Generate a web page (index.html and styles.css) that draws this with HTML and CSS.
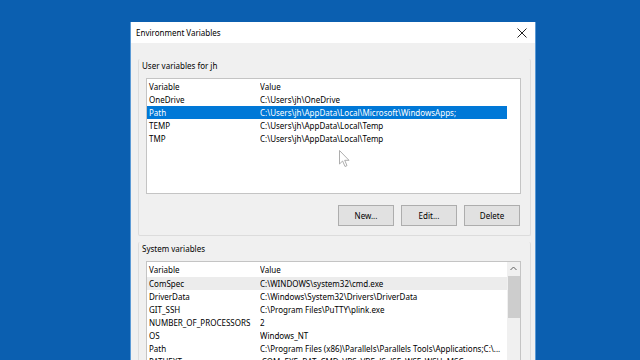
FILE: index.html
```html
<!DOCTYPE html>
<html lang="en">
<head>
    <meta charset="UTF-8">
    <title>Environment Variables</title>
    <link rel="stylesheet" href="styles.css">
</head>
<body>
    <div class="dialog">
        <div class="title-bar">
            <span class="title">Environment Variables</span>
            <svg class="close" width="10" height="10" viewBox="0 0 10 10"><path d="M0.5 0.5L9.5 9.5M9.5 0.5L0.5 9.5" stroke="#222" stroke-width="1"/></svg>
        </div>
        <div class="content">
            <div class="group user-group">
                <div class="group-label">User variables for jh</div>
                <div class="list user-list">
                    <div class="row header"><span class="col-name">Variable</span><span class="col-value">Value</span></div>
                    <div class="row"><span class="col-name">OneDrive</span><span class="col-value">C:\Users\jh\OneDrive</span></div>
                    <div class="row selected"><span class="col-name">Path</span><span class="col-value">C:\Users\jh\AppData\Local\Microsoft\WindowsApps;</span></div>
                    <div class="row"><span class="col-name">TEMP</span><span class="col-value">C:\Users\jh\AppData\Local\Temp</span></div>
                    <div class="row"><span class="col-name">TMP</span><span class="col-value">C:\Users\jh\AppData\Local\Temp</span></div>
                </div>
                <div class="buttons">
                    <button>New...</button>
                    <button>Edit...</button>
                    <button>Delete</button>
                </div>
            </div>
            <div class="group system-group">
                <div class="group-label">System variables</div>
                <div class="list system-list">
                    <div class="rows">
                        <div class="row header"><span class="col-name">Variable</span><span class="col-value">Value</span></div>
                        <div class="row hover"><span class="col-name">ComSpec</span><span class="col-value">C:\WINDOWS\system32\cmd.exe</span></div>
                        <div class="row"><span class="col-name">DriverData</span><span class="col-value">C:\Windows\System32\Drivers\DriverData</span></div>
                        <div class="row"><span class="col-name">GIT_SSH</span><span class="col-value">C:\Program Files\PuTTY\plink.exe</span></div>
                        <div class="row"><span class="col-name">NUMBER_OF_PROCESSORS</span><span class="col-value">2</span></div>
                        <div class="row"><span class="col-name">OS</span><span class="col-value">Windows_NT</span></div>
                        <div class="row"><span class="col-name">Path</span><span class="col-value">C:\Program Files (x86)\Parallels\Parallels Tools\Applications;C:\...</span></div>
                        <div class="row"><span class="col-name">PATHEXT</span><span class="col-value">.COM;.EXE;.BAT;.CMD;.VBS;.VBE;.JS;.JSE;.WSF;.WSH;.MSC</span></div>
                    </div>
                    <div class="scrollbar">
                        <svg class="arrow" width="7" height="5" viewBox="0 0 7 5"><path d="M0.5 4L3.5 1L6.5 4" fill="none" stroke="#606060" stroke-width="1"/></svg>
                        <div class="thumb"></div>
                    </div>
                </div>
            </div>
        </div>
    </div>
    <svg class="cursor" width="12" height="18" viewBox="0 0 12 18"><path d="M0.5 0.5L0.5 14L3.6 11L6 16.5L8 15.6L5.7 10.3L10 10.3Z" fill="#fff" stroke="#999" stroke-width="0.8"/></svg>
</body>
</html>
```

FILE: styles.css
```css
* {
    box-sizing: border-box;
}

body {
    margin: 0;
    height: 360px;
    overflow: hidden;
    background: #0b5fb0;
    font-family: "Noto Sans", "Open Sans", sans-serif;
    font-size: 8px;
    color: #000;
}

.dialog {
    margin: 22px 0 0 130px;
    width: 406px;
    height: 338px;
    border-left: 1px solid #5a9ad6;
    border-right: 1px solid #5a9ad6;
    background: #f0f0f0;
    overflow: hidden;
}

.title-bar {
    height: 21px;
    margin-bottom: 1px;
    background: #fff;
    display: flex;
    align-items: center;
    justify-content: space-between;
    padding: 0 8px 0 5px;
}

.title {
    font-size: 8px;
}

.content {
    padding: 15px 4px 0 7px;
}

.group {
    border: 1px solid #dcdcdc;
    border-top: none;
    border-radius: 2px;
    padding: 0 9px 0 7px;
}

.group-label {
    height: 13px;
    line-height: 13px;
    margin-left: -4px;
}

.user-group {
    padding-bottom: 9px;
}

.system-group {
    margin-top: 6px;
    border-bottom: none;
    height: 200px;
}

.list {
    background: #fff;
    border: 1px solid #c4c4c4;
    margin-top: 6px;
}

.user-list {
    height: 116px;
    padding-top: 1px;
}

.system-list {
    height: 130px;
    display: flex;
}

.rows {
    width: 360px;
    padding-top: 1px;
}

.row {
    height: 13px;
    line-height: 13px;
    display: flex;
    white-space: nowrap;
    width: 360px;
}

.system-list .header {
    height: 14px;
}

.col-name {
    width: 113px;
    padding-left: 2px;
}

.col-value {
    flex: 1;
    overflow: hidden;
}

.row.selected {
    background: #0078d7;
    color: #fff;
}

.row.hover {
    background: #ececec;
}

.buttons {
    display: flex;
    justify-content: flex-end;
    gap: 7px;
    margin-top: 11px;
    padding-right: 1px;
}

button {
    width: 56px;
    height: 21px;
    font-family: inherit;
    font-size: 8px;
    color: #000;
    background: #e1e1e1;
    border: 1px solid #adadad;
    padding: 0;
}

.scrollbar {
    flex: 1;
    background: #f0f0f0;
    display: flex;
    flex-direction: column;
    align-items: center;
}

.arrow {
    margin-top: 4px;
}

.thumb {
    margin-top: 5px;
    width: 12px;
    height: 42px;
    background: #cdcdcd;
}

.cursor {
    position: absolute;
    left: 339px;
    top: 150px;
}
```
